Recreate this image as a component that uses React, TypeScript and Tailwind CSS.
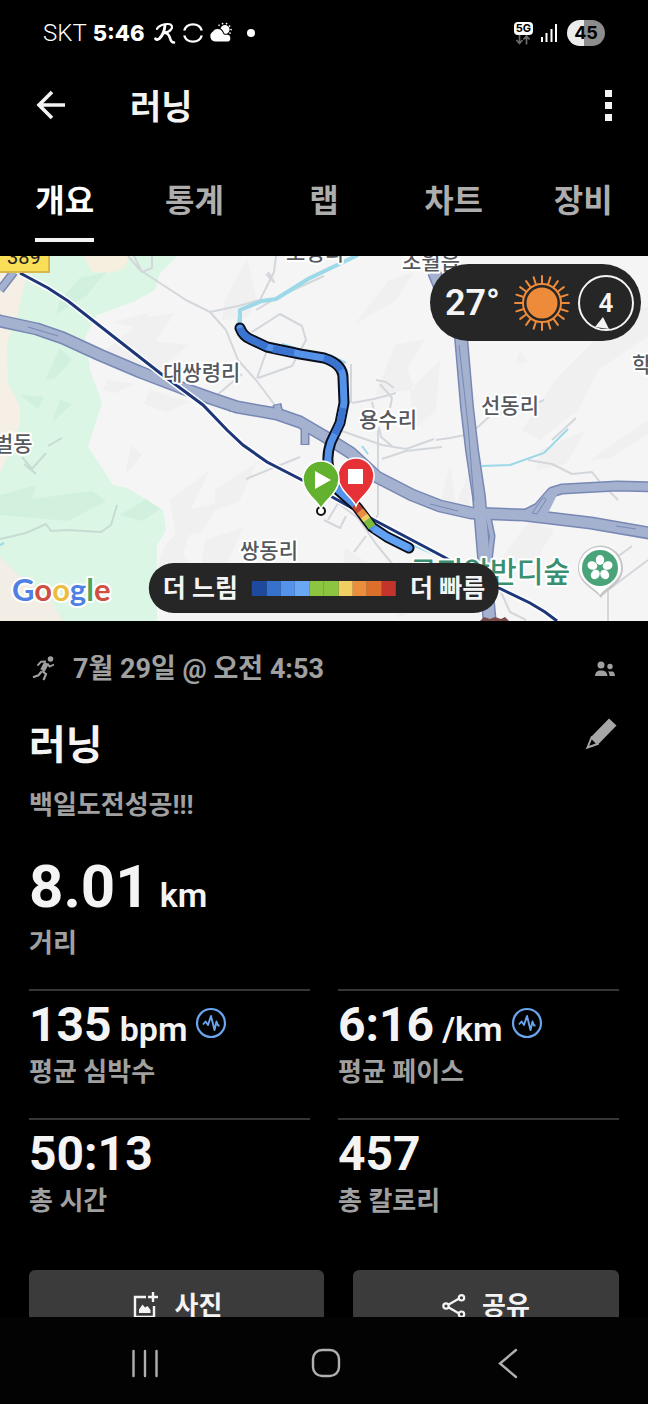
import React from "react";

const TABS = ["개요", "통계", "랩", "차트", "장비"];

const PACE_COLORS = [
  "bg-[#1d4a9c]",
  "bg-[#3672cd]",
  "bg-[#5592ea]",
  "bg-[#6aa8f5]",
  "bg-[#8cc640]",
  "bg-[#8cc640]",
  "bg-[#f2cd62]",
  "bg-[#ea8d3c]",
  "bg-[#dc6f2c]",
  "bg-[#c3342c]",
];

type Stat = { value: string; unit?: string; label: string; graph?: boolean };

const STATS: Stat[] = [
  { value: "135", unit: "bpm", label: "평균 심박수", graph: true },
  { value: "6:16", unit: "/km", label: "평균 페이스", graph: true },
  { value: "50:13", label: "총 시간" },
  { value: "457", label: "총 칼로리" },
];

function StatusBar() {
  return (
    <div className="flex h-[66px] shrink-0 items-center justify-between px-[43px] text-white">
      <div className="flex items-center">
        <span className="text-2xl font-light">SKT</span>
        <span className="ml-1.5 font-['Inter','Noto_Sans_CJK_KR',sans-serif] text-[22px] font-extrabold">5:46</span>
        <svg className="ml-2 h-6 w-6" viewBox="0 0 24 24" fill="none" stroke="currentColor" strokeLinecap="round" strokeLinejoin="round" aria-hidden="true">
          <path d="M4 8c1-3.500 7-5 11-5 4 0 5 3 3 5.500-1.500 2-4 3-7 3.200" strokeWidth="2.200" />
          <path d="M12 4.500c-.5 5-3 10.500-5.500 13-1.500 1.300-3 1.200-4 .2" strokeWidth="2.800" />
          <path d="M12 12c3 0 4 2 5 5 .6 2.500 1.500 4.500 4 4.500" strokeWidth="2.600" />
        </svg>
        <svg className="ml-1 h-6 w-6" viewBox="0 0 24 24" fill="none" stroke="currentColor" strokeWidth="2.400" aria-hidden="true">
          <path d="M3.200 9.500a9.200 8.600 0 0 1 17.600 0M3.200 14.500a9.200 8.600 0 0 0 17.600 0" />
        </svg>
        <svg className="ml-1 h-6 w-6" viewBox="0 0 24 24" fill="currentColor" aria-hidden="true">
          <path d="M6.500 20.500a5.300 5.300 0 0 1-2.800-9.700A5.500 5.500 0 0 1 13.500 11c1 3 2.500 3 4.500 2.800a3.300 3.300 0 0 1 0 6.700z" />
          <path d="M11.500 7.500a4.600 4.600 0 1 1 6.500 5.200c-2.300.5-3-.5-3.600-2.200-.6-1.500-1.600-2.400-2.900-3z" />
          <path d="M10 4.200l.1.100M13.500 2.500l.1.100M17.500 2.500l.1.100M20.500 5l.1.100M22 8.500l.1.100M21 12l.1.100" stroke="currentColor" strokeWidth="1.600" strokeLinecap="round" />
        </svg>
        <span className="ml-3.5 h-2 w-2 rounded-full bg-white" />
      </div>
      <div className="flex items-center">
        <div className="flex flex-col items-center">
          <span className="rounded-sm bg-white px-0.5 font-['Inter',sans-serif] text-[11px] leading-[13px] font-bold text-black">5G</span>
          <svg className="h-2.5 w-4" viewBox="0 0 16 10" fill="none" stroke="#6a6a6a" strokeWidth="1.700" aria-hidden="true">
            <path d="M4.500 0v8M1.500 5l3 3.500 3-3.500M11.500 9.500V1.500M8.500 4.500l3-3.500 3 3.500" />
          </svg>
        </div>
        <svg className="ml-2 h-[18px] w-4" viewBox="0 0 16 18" fill="currentColor" aria-hidden="true">
          <path d="M0 13h2v5H0zM4.500 9h2v9h-2zM9.500 5h2v13h-2zM14 0h2v18h-2z" />
        </svg>
        <span className="ml-2.5 flex h-[26px] w-[38px] items-center justify-center rounded-full bg-linear-to-r from-[#ececec] from-45% to-[#8c8c8c] to-45% font-['Inter',sans-serif] text-lg leading-none font-bold text-black">
          45
        </span>
      </div>
    </div>
  );
}

function AppBar() {
  return (
    <header className="flex h-[78px] shrink-0 items-center px-9 text-[#f4f4f4]">
      <button type="button" aria-label="뒤로" className="w-[30px]">
        <svg className="h-[30px] w-[30px]" viewBox="0 0 30 30" fill="none" stroke="currentColor" strokeWidth="3.600" aria-hidden="true">
          <path d="M29 15H3M16 2L3 15 16 28" />
        </svg>
      </button>
      <h1 className="ml-16 pt-1 text-[34px] leading-10 font-bold">러닝</h1>
      <button type="button" aria-label="더보기" className="ml-auto flex w-2 flex-col items-center gap-[5px]">
        <span className="h-[7px] w-[7px] bg-current" />
        <span className="h-[7px] w-[7px] bg-current" />
        <span className="h-[7px] w-[7px] bg-current" />
      </button>
    </header>
  );
}

function Tabs() {
  return (
    <nav className="grid h-28 shrink-0 grid-cols-5 pb-3.5">
      {TABS.map((tab, i) => (
        <div key={tab} className="flex justify-center">
          <button
            type="button"
            aria-current={i === 0}
            className={
              i === 0
                ? "border-b-4 border-[#f4f4f4] pt-5 text-[32px] leading-10 font-bold text-white"
                : "border-b-4 border-transparent pt-5 text-[32px] leading-10 font-bold text-[#adadad]"
            }
          >
            {tab}
          </button>
        </div>
      ))}
    </nav>
  );
}

const HIGHWAY =
  "M-5 320L0 321 37 329 63 338 100 355 140 372 182 388 213 399 237 407 277 414 300 422 324 436 351 453 377 477 412 495 440 506 471 513 524 515 591 523 655 534";
const CROSS = "M434 272L461 337 467 407 472 450 479 497 484 557 490 625";
const BRANCH = "M524 515L538 508 552 492 562 489 617 486 655 487";
const RAIL =
  "M20 273L48 288 68 301 160 373 203 405 227 430 243 445 267 462 302 480 334 498 374 520 444 557 499 588 530 603 545 612 557 621";
const ROUTE =
  "M240 328Q243 336 250 339L267 347 300 354 324 358Q343 364 343 378L344 403 340 423 331 442Q326 456 329 468 332 484 339 491L357 507 372 527 387 537 409 548";

function RouteMap() {
  return (
    <svg className="block h-auto w-full" viewBox="0 256 648 365" role="img" aria-label="경로 지도">
      <rect x="0" y="256" width="648" height="365" fill="#f5f5f5" />
      <path d="M0 256H177L160 273 155 290 133 302 97 315 85 337 90 370 102 403 90 440 88 447 113 485 127 488 163 510 166 530 157 545V621H0z" fill="#dbf6e5" />
      <path d="M0 256H28L25 283 17 317 7 343 8 383 20 407 20 423 7 457 0 473z" fill="#f5efe5" />
      <path d="M83 256H130L125 268 110 273 92 272z" fill="#f5efe0" />
      <path d="M0 557L13 570 50 600 63 621H0z" fill="#f3eee5" />
      <g fill="#f0f0f0">
        <path d="M100 355l45-38 30-4-20 28 34 4-30 24-40-4zM115 322l36-10-16 16zM225 300l22-42 10 42-10 18-25 2zM107 380l28 4-20 9-12-3zM150 390l40 12-24 10-22-8z" />
        <path d="M170 500l40-30-20 40 30-8-18 30-26 6zM165 545l30-30-12 40 16 20-42-6zM215 490l42-28-18 40-24 8zM205 540l38-12-22 48-20-10zM142 455l-17 20 6-30z" />
        <path d="M354 325l35-45 25-8-18 28zM395 345l30-6-18 30 8 20-40 6zM440 360l-30 30 4 40 22-20zM555 380l60-60 33-14v30l-50 34-20 40-38 30-18-10zM520 350l8 12-12 2zM560 330l20-50 4 28z" />
        <path d="M440 505l10-40 6 40 14-36v50zM500 560l30-40 24 10-20 34zM590 460l58-40v14l-38 24zM390 590l30-20 8 34-30 14zM540 450l46-20-20 34-30 6zM345 548l30 20-14 30-20-14z" />
      </g>
      <g fill="#d1f0dd">
        <path d="M0 495l36-10-4 14 60-8 14 10-38 20-68-6zM120 515l26-16 14 10-18 12zM45 380l15-32 12 12-17 18zM60 300l20-22 26-6-20 24-30 18zM20 395l24 2-6 12zM60 400l12 4-20 18z" />
      </g>

      {/* minor roads */}
      <g fill="none" stroke="#d3d7dc" strokeWidth="2" strokeLinejoin="round">
        <path d="M128 256l12 14 46 30 24 12 16 18 12 30 18 20 24 32M210 312l28-6 22-6 14-28 2-16M256 310l24-14 44-20M252 332l28-18 22 12 4 14-14 26-34 12M267 350l-10 28M240 310l-3 16M268 272l6 10-8-8M216 396l26-22M134 256l8 16 10-4v-12" />
        <path d="M351 364v39M352 403l22-4 22-6M380 384l12 14-2 10M376 380l10 2 8 6M372 402l2 8M379 427l2 10 12 10M378 430v84l-4 10M436 440l14-2 20-4 20-18 34-8 20-8M434 439l-28 10-24-4-46-16M382 459l24-8 36-4M528 460l24 4 20 10 20-2 8 10 18 18M300 457l-54 22M334 500l24 18 18 26 18 22M328 520l12-20M324 520l16 8 6-12M366 536l-12 16M500 590l10 22 16 8M608 590l40-30M608 590v31M600 570l32-24M576 418l-24 22" />
        <path d="M0 539l26-6 20-9 5 7 16-1 34 2 10-7 6-20M62 438l-14 8M22 457l10 12 14-16M24 464l12 10" stroke="#c6dcd3" />
      </g>
      <g fill="none" stroke="#9bd8e8">
        <path d="M240 325v-15l22-9 14-2 32-20 50-24" strokeWidth="4" />
        <path d="M282 344l14 4M330 355l16 8M362 446l6 8M482 466l28-1 34-12 24-24" strokeWidth="2" />
        <path d="M412 545l44 18 30 30M0 545l4-2" strokeWidth="2" />
      </g>

      {/* highways */}
      <g fill="none" strokeLinejoin="round">
        <path d="M0 290l14-18M305 425v20M277 404l2 10M234 404v8" stroke="#7888b5" strokeWidth="9" />
        <path d="M487 512l5 24-4 34" stroke="#7888b5" strokeWidth="7" />
        <path d={BRANCH} stroke="#7888b5" strokeWidth="11" />
        <path d={HIGHWAY} stroke="#7888b5" strokeWidth="13" />
        <path d={CROSS} stroke="#7888b5" strokeWidth="14" />
        <path d="M0 290l14-18M305 425v19M277 405l2 8M234 405v6" stroke="#a4b1cf" strokeWidth="6" />
        <path d="M487 512l5 24-4 34" stroke="#a4b1cf" strokeWidth="4" />
        <path d={BRANCH} stroke="#a4b1cf" strokeWidth="8" />
        <path d="M528 517l20-22 12-6-14 28z" fill="#a4b1cf" />
        <path d={HIGHWAY} stroke="#a4b1cf" strokeWidth="10" />
        <path d={CROSS} stroke="#a4b1cf" strokeWidth="11" />
        <path d="M28 327l30 9M430 504l28 7M616 526l20 3" stroke="#7888b5" strokeWidth="1" />
        <path d="M532 513l10-14q3-3 4 1l-9 14z" fill="#a4b1cf" stroke="#7888b5" />
        <path d="M459 345l9 80 6 76" stroke="#7888b5" strokeWidth="1" />
      </g>
      <path d="M480 621l4-4 6 2 5-2 6 2 4-2 4 4z" fill="#7b4a4a" />

      <path d={RAIL} fill="none" stroke="#fff" strokeWidth="6" />
      <path d={RAIL} fill="none" stroke="#1c3678" strokeWidth="3" />

      {/* recorded route, coloured by pace */}
      <circle cx="321" cy="511" r="4" fill="#fff" stroke="#111" strokeWidth="2" />
      <g fill="none" strokeLinejoin="round">
        <path d={ROUTE} stroke="#0a0f1c" strokeWidth="11" strokeLinecap="round" />
        <path d={ROUTE} stroke="#5592ea" strokeWidth="7" strokeLinecap="round" />
        <path d="M240 328Q243 336 250 339L267 347M273 349L294 353M324 358Q336 362 341 370M343 408L340 423 335 434" stroke="#3a73d0" strokeWidth="7" />
        <path d="M374 529L387 537 409 548" stroke="#63a2f3" strokeWidth="7" />
        <path d="M355 505L360 511" stroke="#c3442c" strokeWidth="8" />
        <path d="M360 511L364 516" stroke="#ea8d3c" strokeWidth="8" />
        <path d="M364 516L367 520" stroke="#f2cd62" strokeWidth="8" />
        <path d="M367 520L372 527" stroke="#7cbb3c" strokeWidth="8" />
      </g>

      {/* place names */}
      <g fontSize="21" fontWeight="500" fill="#55585d" stroke="#fff" strokeWidth="4" strokeLinejoin="round" paintOrder="stroke">
        <text x="163" y="380">대쌍령리</text>
        <text x="359" y="427">용수리</text>
        <text x="481" y="413">선동리</text>
        <text x="240" y="558">쌍동리</text>
        <text x="632" y="372">학동리</text>
        <text x="-6" y="451">벌동</text>
        <text x="286" y="260">도평리</text>
        <text x="402" y="269">초월읍</text>
      </g>
      <text x="410" y="583" fontSize="29" fontWeight="500" fill="#3a8f70" stroke="#fff" strokeWidth="4" strokeLinejoin="round" paintOrder="stroke">
        곤지암반디숲
      </text>

      <rect x="-2" y="240" width="51" height="32" fill="#f9de58" stroke="#d8b84a" strokeWidth="2" />
      <text x="7" y="264" fontSize="20" fill="#222">
        389
      </text>

      {/* park marker */}
      <path d="M601 598c-5-8-23-14-23-30a22.500 22.500 0 0 1 45 0c0 16-17 22-22 30z" fill="#c4c6c8" />
      <path d="M600 595c-5-8-21-13-21-27a21 21 0 0 1 42 0c0 14-16 19-21 27z" fill="#fff" />
      <circle cx="600" cy="568" r="18" fill="#4ba379" />
      <g fill="#fff">
        <ellipse cx="600" cy="560" rx="4.200" ry="5" />
        <ellipse cx="600" cy="560" rx="4.200" ry="5" transform="rotate(72 600 568)" />
        <ellipse cx="600" cy="560" rx="4.200" ry="5" transform="rotate(144 600 568)" />
        <ellipse cx="600" cy="560" rx="4.200" ry="5" transform="rotate(216 600 568)" />
        <ellipse cx="600" cy="560" rx="4.200" ry="5" transform="rotate(288 600 568)" />
      </g>

      {/* finish and start pins */}
      <path d="M356 506c-3-8-18-16-18-30a18 18 0 0 1 36 0c0 14-15 22-18 30z" fill="#e63236" stroke="#fff" strokeWidth="1.500" />
      <rect x="348" y="469" width="15" height="15" fill="#fff" />
      <path d="M321 509c-3-8-18-16-18-30a18 18 0 0 1 36 0c0 14-15 22-18 30z" fill="#62b22f" stroke="#fff" strokeWidth="1.500" />
      <path d="M315 471v18l16-9z" fill="#fff" />

      <text x="12" y="601" fontSize="31" className="font-['Lato',sans-serif]" fontWeight="700" stroke="#fff" strokeWidth="4" strokeLinejoin="round" paintOrder="stroke">
        <tspan fill="#4f80e2">G</tspan>
        <tspan fill="#cf4f42">o</tspan>
        <tspan fill="#ecbc3d">o</tspan>
        <tspan fill="#4f80e2">g</tspan>
        <tspan fill="#4ca55c">l</tspan>
        <tspan fill="#cf4f42">e</tspan>
      </text>
    </svg>
  );
}

function SunIcon() {
  const rays = Array.from({ length: 20 }, (_, i) => i * 18);
  return (
    <svg className="h-14 w-14" viewBox="0 0 56 56" fill="none" stroke="#ee8b3a" strokeWidth="2" strokeLinecap="round" aria-hidden="true">
      <circle cx="28" cy="28" r="15.500" fill="#ee8b3a" stroke="none" />
      <circle cx="28" cy="28" r="19" />
      {rays.map((a) => (
        <path key={a} d="M28 8V1" transform={`rotate(${a} 28 28)`} />
      ))}
    </svg>
  );
}

function MapPanel() {
  return (
    <section className="relative overflow-hidden">
      <RouteMap />
      <div className="absolute top-2 right-[7px] flex h-[77px] items-center rounded-full bg-[#262626] pr-[7px] pl-[15px] text-[#f4f4f4]">
        <span className="text-[36px] leading-none font-semibold">27°</span>
        <span className="ml-3.5">
          <SunIcon />
        </span>
        <span className="relative ml-2 flex h-14 w-14 items-center justify-center rounded-full border-2 border-[#f4f4f4] text-[26px] leading-none font-semibold">
          4
          <svg className="absolute bottom-0 left-3.5 h-3 w-4" viewBox="0 0 16 12" fill="currentColor" aria-hidden="true">
            <path d="M9 0L1 10 15 12z" />
          </svg>
        </span>
      </div>
      <div className="absolute bottom-2 left-1/2 flex h-[50px] -translate-x-1/2 items-center rounded-full bg-[#262626] px-3.5 text-[25px] leading-8 font-bold whitespace-nowrap text-[#f4f4f4]">
        <span className="pt-0.5">더 느림</span>
        <span className="mx-3.5 flex h-[15px] w-36">
          {PACE_COLORS.map((c, i) => (
            <span key={i} className={`flex-1 ${c}`} />
          ))}
        </span>
        <span className="pt-0.5">더 빠름</span>
      </div>
    </section>
  );
}

function PulseIcon() {
  return (
    <svg className="h-8 w-8" viewBox="0 0 32 32" fill="none" stroke="#6ba5ee" strokeLinejoin="round" aria-hidden="true">
      <circle cx="16" cy="16" r="14" strokeWidth="2.200" />
      <path d="M8 17.500l2.500-3L13 18l3-9 3.500 14 2-8.500 1.500 4h1.500" strokeWidth="1.900" />
    </svg>
  );
}

function StatCell({ stat }: { stat: Stat }) {
  return (
    <div className="border-t-2 border-[#363636] pt-1.5 pb-[30px]">
      <div className="flex h-14 items-start">
        <span className="text-5xl leading-14 font-bold text-[#f4f4f4]">
          {stat.value}
          {stat.unit && <span className="ml-2 text-[34px] leading-none font-semibold">{stat.unit}</span>}
        </span>
        {stat.graph && (
          <button type="button" aria-label={`${stat.label} 차트`} className="mt-2.5 ml-2">
            <PulseIcon />
          </button>
        )}
      </div>
      <p className="mt-[3px] text-[26px] leading-8 font-bold text-[#a0a0a0]">{stat.label}</p>
    </div>
  );
}

function Summary() {
  return (
    <section className="px-[29px] pt-8">
      <div className="flex h-8 items-center text-[#a0a0a0]">
        <svg className="h-7 w-7" viewBox="0 0 28 28" fill="none" stroke="currentColor" aria-hidden="true">
          <circle cx="21.500" cy="4" r="2.800" fill="currentColor" stroke="none" />
          <path d="M17.500 8l-4 7.500" strokeWidth="5" />
          <path d="M17 6.500l-5 .2-3.500 4M18.500 8.500l2 3 4.500-2" strokeWidth="1.900" />
          <path d="M13 16l4 3.200-2.500 5.800M12.500 16.500l-3 3.700-5.500 2" strokeWidth="2.200" />
        </svg>
        <p className="ml-4 text-[27px] leading-8 font-bold">7월 29일 @ 오전 4:53</p>
        <svg className="mr-1 ml-auto h-4 w-5" viewBox="0 0 20 16" fill="currentColor" aria-hidden="true">
          <circle cx="6" cy="4" r="3.500" />
          <circle cx="15" cy="5.500" r="2.700" />
          <path d="M0 15c.5-4 2-5.500 6-5.500s6 1.500 6.500 5.500zM13 10.500h5c1.200.8 1.700 2 2 4.500h-5.500c0-2-.5-3.500-1.500-4.500z" />
        </svg>
      </div>

      <div className="mt-[37px] flex items-start justify-between">
        <h2 className="text-[40px] leading-12 font-bold text-[#f4f4f4]">러닝</h2>
        <button type="button" aria-label="편집" className="-mt-1 mr-0.5 text-[#a6a6a6]">
          <svg className="h-8 w-8" viewBox="0 0 32 32" fill="currentColor" aria-hidden="true">
            <path d="M24 .5l7.500 7L13.500 26 6 19z" />
            <path d="M6.500 19.500L2.500 29.500 12.500 26z" fill="none" stroke="currentColor" strokeWidth="2" />
          </svg>
        </button>
      </div>

      <p className="mt-[19px] text-[26px] leading-8 font-bold text-[#a0a0a0]">백일도전성공!!!</p>

      <p className="mt-[30px] text-[60px] leading-[72px] font-bold text-[#f4f4f4]">
        8.01
        <span className="ml-2.5 text-[34px] leading-none font-semibold">km</span>
      </p>
      <p className="mt-1 text-[26px] leading-8 font-bold text-[#a0a0a0]">거리</p>

      <div className="mt-[30px] grid grid-cols-2 gap-x-7">
        {STATS.map((s) => (
          <StatCell key={s.label} stat={s} />
        ))}
      </div>

      <div className="mt-[23px] grid grid-cols-[295fr_266fr] gap-x-[29px] pb-6 text-[26px] leading-8 font-bold text-[#f4f4f4]">
        <button type="button" className="flex h-[72px] items-center justify-center gap-4 rounded-md bg-[#3b3b3b]">
          <svg className="h-7 w-7" viewBox="0 0 28 28" fill="none" stroke="currentColor" strokeWidth="2.400" aria-hidden="true">
            <path d="M15 5H4v20h19V14M22 0v10M17 5h10" />
            <path d="M8 21v-3.500l3.500-5 2.500 3 2.500-1.500 3 4v3z" fill="currentColor" stroke="none" />
          </svg>
          사진
        </button>
        <button type="button" className="flex h-[72px] items-center justify-center gap-4 rounded-md bg-[#3b3b3b]">
          <svg className="h-6 w-6" viewBox="0 0 24 24" fill="none" stroke="currentColor" strokeWidth="2.200" aria-hidden="true">
            <path d="M5 11.500L18 4M5 12.500L18 20" />
            <circle cx="4" cy="12" r="2.700" fill="#3b3b3b" />
            <circle cx="19.500" cy="3.800" r="2.700" fill="#3b3b3b" />
            <circle cx="19.500" cy="20.200" r="2.700" fill="#3b3b3b" />
          </svg>
          공유
        </button>
      </div>
    </section>
  );
}

function SystemNav() {
  return (
    <nav className="grid h-[87px] shrink-0 grid-cols-3 items-center bg-[#030303] pt-1 pr-[50px] pl-[54px] text-[#b0b0b0]">
      <button type="button" aria-label="최근 앱" className="flex justify-center">
        <svg className="h-8 w-8" viewBox="0 0 32 32" stroke="currentColor" strokeWidth="2.400" strokeLinecap="round" aria-hidden="true">
          <path d="M4.500 4v25M16 4v25M27.500 4v25" />
        </svg>
      </button>
      <button type="button" aria-label="홈" className="flex justify-center">
        <svg className="h-8 w-8" viewBox="0 0 32 32" fill="none" stroke="currentColor" strokeWidth="2.400" aria-hidden="true">
          <rect x="3" y="3" width="26" height="26" rx="9" />
        </svg>
      </button>
      <button type="button" aria-label="뒤로 가기" className="flex justify-center">
        <svg className="h-8 w-8" viewBox="0 0 32 32" fill="none" stroke="currentColor" strokeWidth="2.400" strokeLinecap="round" aria-hidden="true">
          <path d="M25 3L9 16.500 25 30" />
        </svg>
      </button>
    </nav>
  );
}

export default function App() {
  return (
    <div className="flex h-screen flex-col bg-black font-['Roboto','Noto_Sans_CJK_KR',sans-serif]">
      <StatusBar />
      <AppBar />
      <Tabs />
      <main className="min-h-0 flex-1 overflow-y-auto [scrollbar-width:none]">
        <MapPanel />
        <Summary />
      </main>
      <SystemNav />
    </div>
  );
}
